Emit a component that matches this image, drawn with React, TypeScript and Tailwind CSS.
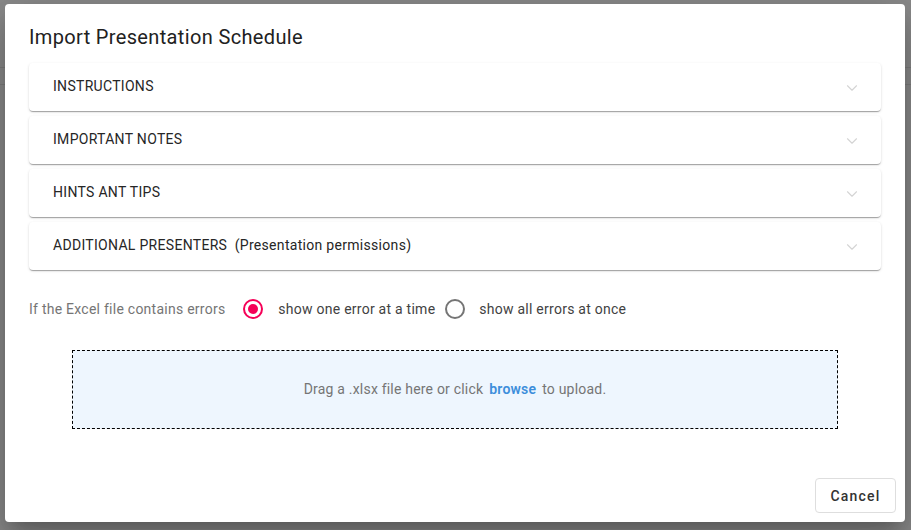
import { ChevronDown } from "lucide-react";

const sections = [
  "INSTRUCTIONS",
  "IMPORTANT NOTES",
  "HINTS ANT TIPS",
  "ADDITIONAL PRESENTERS  (Presentation permissions)",
];

function Radio({ checked }: { checked: boolean }) {
  return checked ? (
    <span className="flex h-5 w-5 items-center justify-center rounded-full border-2 border-[#f50057]">
      <span className="h-[10px] w-[10px] rounded-full bg-[#f50057]" />
    </span>
  ) : (
    <span className="h-5 w-5 rounded-full border-2 border-[#757575]" />
  );
}

export default function App() {
  return (
    <div
      className="relative h-[530px] w-[911px] overflow-hidden bg-[#8a8a8a]"
      style={{ fontFamily: "Roboto, 'Liberation Sans', sans-serif" }}
    >
      {/* page behind the backdrop */}
      <div className="absolute left-0 right-0 top-[67px] h-px bg-[#7d7d7d]" />
      <div className="absolute left-0 right-0 top-[84px] h-px bg-[#7d7d7d]" />

      <div className="absolute left-[5px] top-[4px] flex h-[518px] w-[900px] flex-col rounded bg-white shadow-[0_11px_15px_-7px_rgba(0,0,0,0.2),0_24px_38px_3px_rgba(0,0,0,0.14),0_9px_46px_8px_rgba(0,0,0,0.12)]">
        <h2 className="px-6 pb-[10px] pt-[17px] text-[20px] font-normal leading-8 tracking-[0.35px] text-[#212121]">
          Import Presentation Schedule
        </h2>

        <div className="flex flex-col gap-[5px] px-6">
          {sections.map((s) => (
            <div
              key={s}
              className="flex h-12 items-center justify-between rounded bg-white pb-[2px] pl-6 pr-[20px] shadow-[0_2px_1px_-1px_rgba(0,0,0,0.2),0_1px_1px_0_rgba(0,0,0,0.14),0_1px_3px_0_rgba(0,0,0,0.12)]"
            >
              <span className="whitespace-pre text-sm font-normal tracking-[0.3px] text-[#262626]">{s}</span>
              <ChevronDown className="mt-1 h-[18px] w-[18px] text-[#d4d4d4]" strokeWidth={1.5} />
            </div>
          ))}
        </div>

        <div className="mt-[18px] flex h-[42px] items-center px-6 text-sm tracking-[0.25px] text-[#757575]">
          <span>If the Excel file contains errors</span>
          <span className="ml-[18px] flex items-center">
            <Radio checked />
          </span>
          <span className="ml-[15px] text-[#424242]">show one error at a time</span>
          <span className="ml-[10px] flex items-center">
            <Radio checked={false} />
          </span>
          <span className="ml-[14px] text-[#424242]">show all errors at once</span>
        </div>

        <div className="mx-[67px] mt-[20px] flex h-[79px] items-center justify-center border border-dashed border-black bg-[#eef6fe] pb-[2px] text-sm tracking-[0.2px] text-[#757575]">
          <span>Drag a .xlsx file here or click</span>
          <span className="mx-[6px] font-semibold text-[#3d8edb]">browse</span>
          <span>to upload.</span>
        </div>

        <div className="mt-auto flex justify-end p-[9px]">
          <button className="h-[35px] w-[81px] rounded border border-[#dedede] bg-white text-sm font-medium tracking-[1.2px] text-[#333]">
            Cancel
          </button>
        </div>
      </div>
    </div>
  );
}
